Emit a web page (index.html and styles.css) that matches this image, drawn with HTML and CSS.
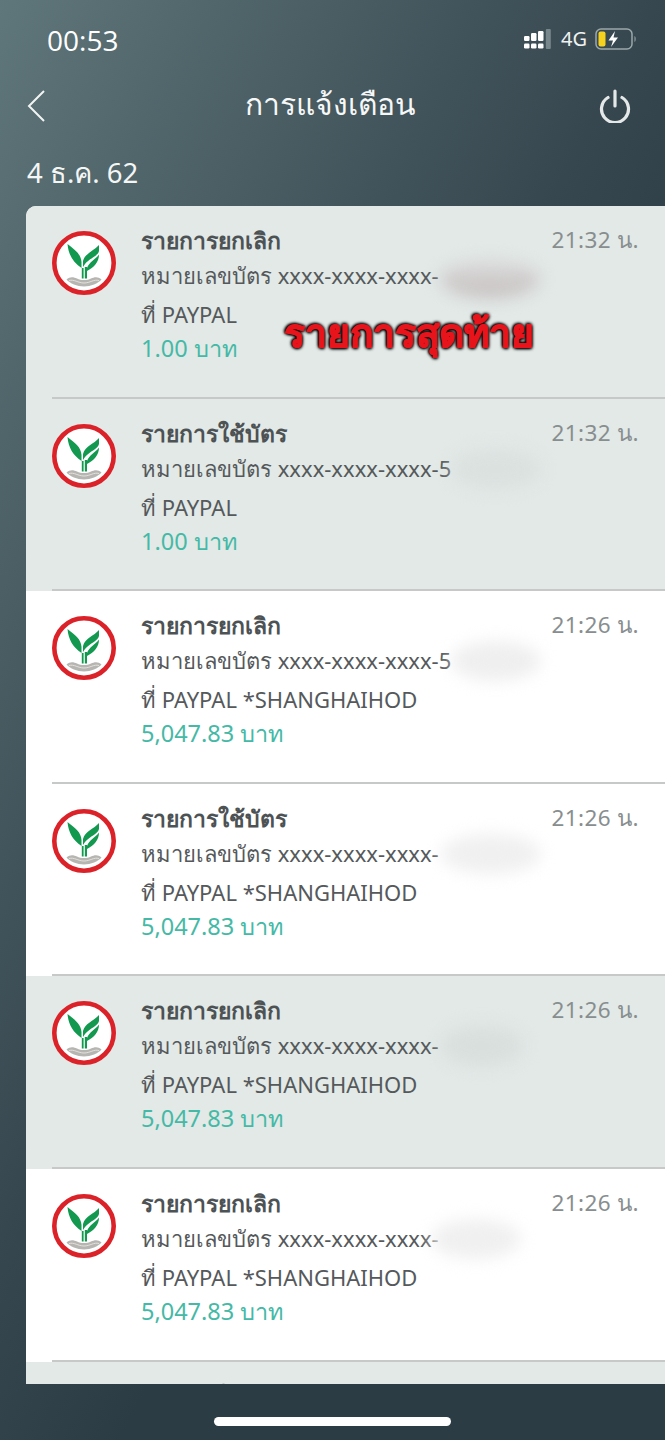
FILE: index.html
```html
<!DOCTYPE html>
<html lang="th">
<head>
<meta charset="utf-8">
<title>การแจ้งเตือน</title>
<link rel="stylesheet" href="styles.css">
</head>
<body>
<svg class="defs" width="0" height="0" aria-hidden="true">
  <symbol id="kbank" viewBox="0 0 64 64">
    <circle cx="32" cy="32" r="29.700" fill="#fff" stroke="#dc2229" stroke-width="4.600"/>
    <path d="M15.500 13C16.500 24 21 31 29.500 37V31C29 23 23 19 15.500 13Z" fill="#12994f"/>
    <path d="M47 14C42 20 33 22 31 30V36L33 33C38 27 46 25 47 20Z" fill="#12994f"/>
    <path d="M47 23.500C47 31 42 36.500 35 40V37C37 31 43 29 47 23.500Z" fill="#12994f"/>
    <path d="M29.800 37H31.600V47.500H29.800ZM32.800 36H35V47.500H32.800Z" fill="#12994f"/>
    <path d="M14.500 48.500C18 45 22 46 25 47.500C29 49.500 35 49.500 39 47.500C42 46 46 45 49.500 48.500C46 52.500 39 55.500 32 55.500C25 55.500 18 52.500 14.500 48.500Z" fill="#b7b5b2"/>
    <path d="M17 49.500C22 48 26 52 32 52C38 52 42 48 47 49.500" fill="none" stroke="#e4e1dd" stroke-width="1"/>
  </symbol>
</svg>
<div class="screen">
  <div class="status">
    <span class="clock">00:53</span>
    <div class="status-right">
      <svg class="signal" width="27" height="20" viewBox="0 0 27 20">
        <g fill="#fff">
          <rect x="0" y="7" width="5.500" height="5" rx="1.200"/><rect x="0" y="14.500" width="5.500" height="5" rx="1.200"/>
          <rect x="7" y="4" width="5.500" height="8" rx="1.200"/><rect x="7" y="14.500" width="5.500" height="5" rx="1.200"/>
          <rect x="14" y="2" width="5.500" height="10" rx="1.200"/><rect x="14" y="14.500" width="5.500" height="5" rx="1.200"/>
        </g>
        <rect x="21.800" y="0" width="5" height="20" rx="1" fill="#77878c"/>
      </svg>
      <span class="net">4G</span>
      <svg class="battery" width="42" height="22" viewBox="0 0 42 22">
        <rect x="1" y="1" width="36" height="20" rx="5" fill="none" stroke="#9aa8aa" stroke-width="1.500"/>
        <rect x="3.500" y="3.500" width="7" height="15" rx="2" fill="#f6d21f"/>
        <path d="M39.500 8C41 8.500 41 13.500 39.500 14Z" fill="#9aa8aa"/>
        <path d="M20 3L13.500 12.500H18L16 19L23 9.500H18.500Z" fill="#fff"/>
      </svg>
    </div>
  </div>

  <div class="nav">
    <svg class="nav-icon" width="20" height="32" viewBox="0 0 20 32"><path d="M17 1L2 16L17 31" fill="none" stroke="#f2f4f4" stroke-width="2"/></svg>
    <span class="nav-title">การแจ้งเตือน</span>
    <svg class="nav-icon nav-power" width="32" height="34" viewBox="0 0 32 34"><path d="M9 8.500A13.500 13.500 0 1 0 23 8.500" fill="none" stroke="#e4e8e8" stroke-width="3.200" stroke-linecap="round"/><path d="M16 2V17" fill="none" stroke="#e4e8e8" stroke-width="3.200" stroke-linecap="round"/></svg>
  </div>

  <div class="date">4 ธ.ค. 62</div>

  <div class="card">
    <div class="row read">
      <svg class="logo"><use href="#kbank"/></svg>
      <div class="body">
        <div class="title">รายการยกเลิก</div>
        <div class="line">หมายเลขบัตร xxxx-xxxx-xxxx-</div>
        <div class="line">ที่ PAYPAL</div>
        <div class="amount">1.00 บาท</div>
      </div>
      <span class="time">21:32 น.</span>
      <span class="smear smear-1"></span>
      <span class="stamp">รายการสุดท้าย</span>
    </div>
    <div class="row read">
      <svg class="logo"><use href="#kbank"/></svg>
      <div class="body">
        <div class="title">รายการใช้บัตร</div>
        <div class="line">หมายเลขบัตร xxxx-xxxx-xxxx-5</div>
        <div class="line">ที่ PAYPAL</div>
        <div class="amount">1.00 บาท</div>
      </div>
      <span class="time">21:32 น.</span>
      <span class="smear smear-2"></span>
    </div>
    <div class="row">
      <svg class="logo"><use href="#kbank"/></svg>
      <div class="body">
        <div class="title">รายการยกเลิก</div>
        <div class="line">หมายเลขบัตร xxxx-xxxx-xxxx-5</div>
        <div class="line">ที่ PAYPAL *SHANGHAIHOD</div>
        <div class="amount">5,047.83 บาท</div>
      </div>
      <span class="time">21:26 น.</span>
      <span class="smear smear-3"></span>
    </div>
    <div class="row">
      <svg class="logo"><use href="#kbank"/></svg>
      <div class="body">
        <div class="title">รายการใช้บัตร</div>
        <div class="line">หมายเลขบัตร xxxx-xxxx-xxxx-</div>
        <div class="line">ที่ PAYPAL *SHANGHAIHOD</div>
        <div class="amount">5,047.83 บาท</div>
      </div>
      <span class="time">21:26 น.</span>
      <span class="smear smear-4"></span>
    </div>
    <div class="row read">
      <svg class="logo"><use href="#kbank"/></svg>
      <div class="body">
        <div class="title">รายการยกเลิก</div>
        <div class="line">หมายเลขบัตร xxxx-xxxx-xxxx-</div>
        <div class="line">ที่ PAYPAL *SHANGHAIHOD</div>
        <div class="amount">5,047.83 บาท</div>
      </div>
      <span class="time">21:26 น.</span>
      <span class="smear smear-5"></span>
    </div>
    <div class="row">
      <svg class="logo"><use href="#kbank"/></svg>
      <div class="body">
        <div class="title">รายการยกเลิก</div>
        <div class="line">หมายเลขบัตร xxxx-xxxx-xxxx-</div>
        <div class="line">ที่ PAYPAL *SHANGHAIHOD</div>
        <div class="amount">5,047.83 บาท</div>
      </div>
      <span class="time">21:26 น.</span>
      <span class="smear smear-6"></span>
    </div>
    <div class="row read">
      <svg class="logo"><use href="#kbank"/></svg>
      <div class="body">
        <div class="title">รายการใช้บัตร</div>
      </div>
    </div>
  </div>

  <div class="home-bar"></div>
</div>
</body>
</html>
```
FILE: styles.css
```css
* { box-sizing: border-box; }
html, body { margin: 0; height: 100%; }
body {
  font-family: "Noto Sans", "Open Sans", "Liberation Sans", sans-serif;
  overflow: hidden;
}
.defs { position: absolute; }
.screen {
  width: 665px;
  height: 1440px;
  background: linear-gradient(118deg, #5f767a 0%, #4a5e64 23%, #37474f 46%, #2c3c44 62%, #2c3c44 100%);
  color: #fff;
  display: flex;
  flex-direction: column;
  overflow: hidden;
}
.status {
  height: 80px;
  padding: 25px 28px 0 47px;
  display: flex;
  justify-content: space-between;
  align-items: flex-start;
}
.clock { font-size: 28px; line-height: 30px; font-family: "Open Sans", sans-serif; font-weight: 500; }
.status-right { display: flex; align-items: center; gap: 7px; height: 28px; }
.net { font-size: 20px; line-height: 28px; color: #f0f2f2; margin: 0 1px 0 3px; }
.nav {
  height: 52px;
  padding: 0 34px 0 27px;
  display: grid;
  grid-template-columns: 1fr auto 1fr;
  align-items: center;
}
.nav-icon { display: block; }
.nav-power { justify-self: end; }
.nav-title { font-size: 30px; line-height: 48px; height: 52px; margin-left: 2px; color: #f6f7f7; }
.date {
  height: 74px;
  padding: 24px 0 0 27px;
  font-size: 27.500px;
  line-height: 34px;
  color: #f4f6f6;
}
.card {
  margin-left: 26px;
  height: 1178px;
  border-radius: 10px 0 0 0;
  overflow: hidden;
  background: #fff;
}
.row {
  position: relative;
  height: 192.600px;
  padding: 23px 26px 0;
  display: flex;
  align-items: flex-start;
  background: #fff;
}
.row::after {
  content: "";
  position: absolute;
  left: 26px;
  right: 0;
  bottom: 0;
  height: 2px;
  background: #c6c9c8;
}
.row.read { background: #e2e9e7; }
.logo { width: 64px; height: 64px; flex: none; display: block; margin-top: 2px; }
.body { margin-left: 25px; flex: 1; color: #4f5456; }
.title { font-size: 23px; line-height: 22px; font-weight: 700; color: #4d5254; }
.line { font-size: 22px; line-height: 39px; color: #55595b; }
.title + .line { margin-top: 5px; }
.amount { font-size: 23.500px; line-height: 28px; color: #45b9a6; }
.time { font-size: 22.500px; line-height: 22px; color: #888e8f; letter-spacing: .4px; }
.smear {
  position: absolute;
  left: 425px;
  top: 50px;
  width: 90px;
  height: 40px;
  border-radius: 50%;
  filter: blur(8px);
}
.smear-1 { left: 414px; top: 54px; width: 100px; height: 38px; background: linear-gradient(#dcdcdc, #c4bdbd); }
.smear-2 { background: #dbe1df; }
.smear-3 { background: #efefef; }
.smear-4 { left: 415px; width: 100px; background: #f0f0f0; }
.smear-5 { left: 415px; width: 82px; background: #d9dfdd; }
.smear-6 { left: 405px; width: 90px; background: #f0f0f0; }
.stamp {
  position: absolute;
  left: 258px;
  top: 101px;
  font-size: 38.500px;
  line-height: 50px;
  font-weight: 700;
  color: #e8141c;
  -webkit-text-stroke: 1px #e8141c;
  text-shadow: 0 0 3px #000, 0 0 3px #000, 0 0 4px #000, 1px 1px 3px #000, -1px -1px 3px #000;
}
.home-bar {
  width: 237px;
  height: 9px;
  margin: 33px auto 0 214px;
  border-radius: 5px;
  background: #fff;
}
```
